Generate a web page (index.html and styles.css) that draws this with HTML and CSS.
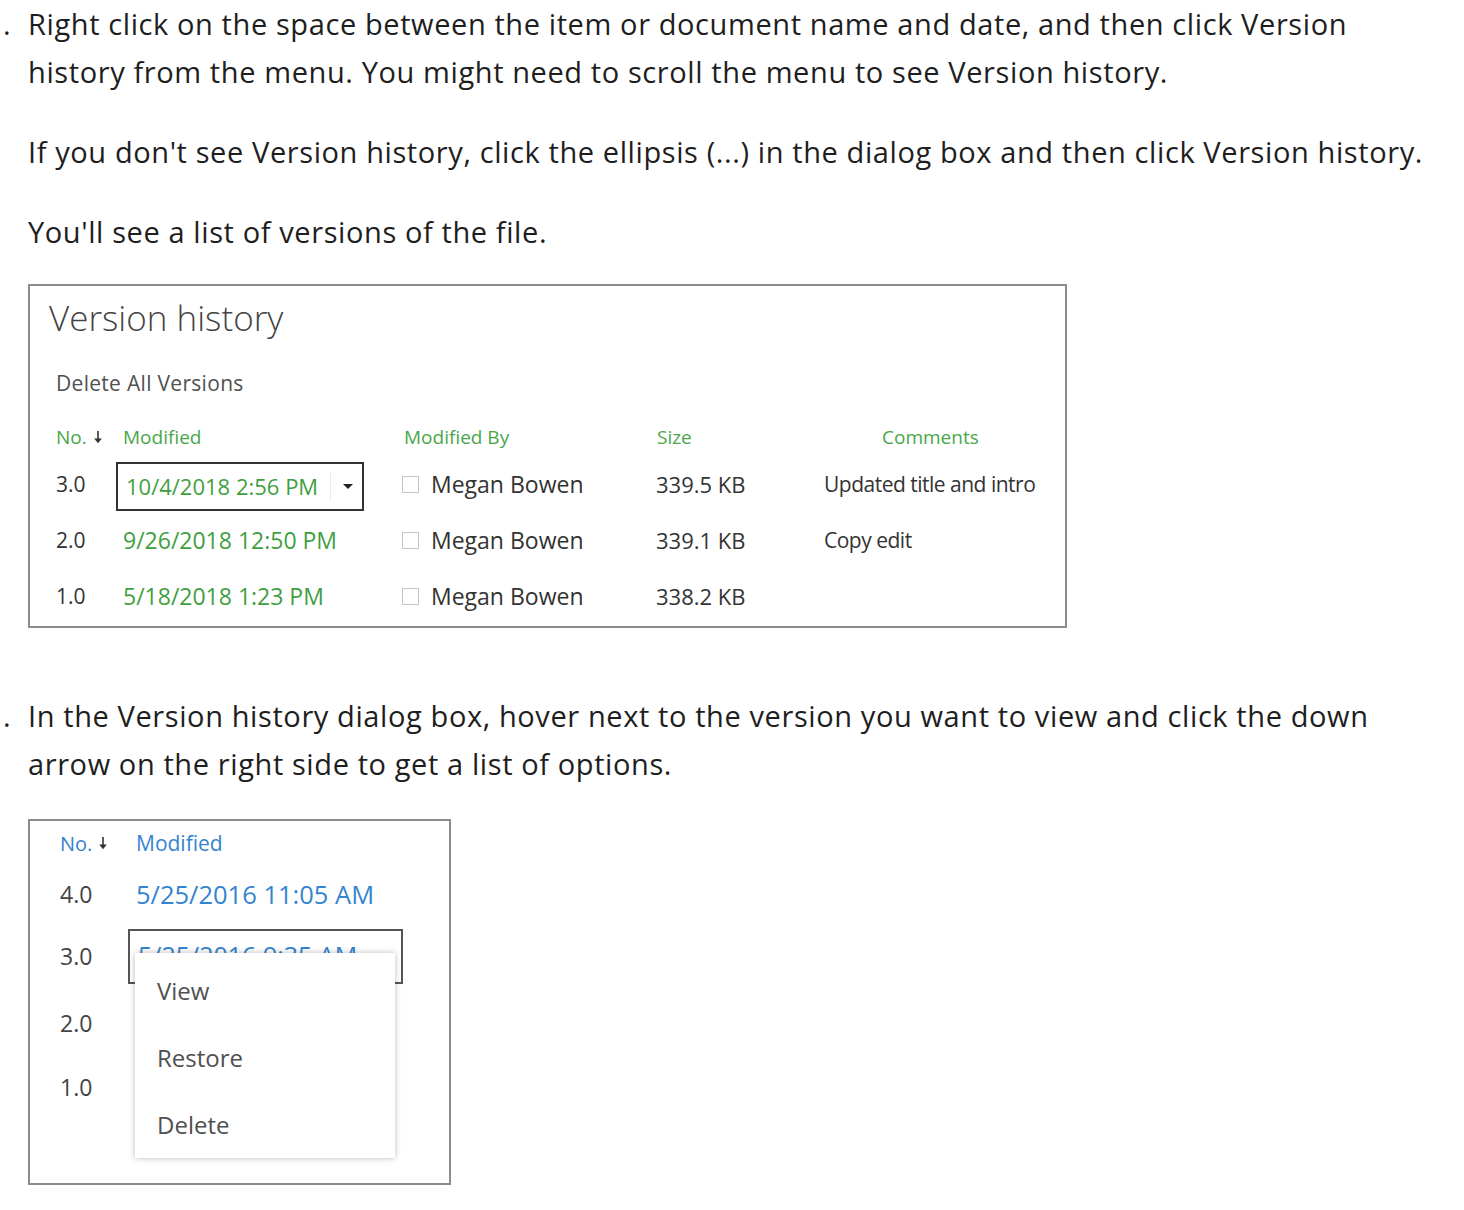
FILE: index.html
```html
<!DOCTYPE html>
<html lang="en">

<head>
    <meta charset="UTF-8">
    <meta name="viewport" content="width=device-width, initial-scale=1.0">
    <title>Version history</title>
    <link rel="stylesheet" href="styles.css">
</head>

<body>
    <div class="step">
        <div class="num">.</div>
        <div class="content">
            <p>Right click on the space between the item or document name and date, and then click Version history from the menu. You might need to scroll the menu to see Version history.</p>
            <p>If you don't see Version history, click the ellipsis (...) in the dialog box and then click Version history.</p>
            <p>You'll see a list of versions of the file.</p>

            <div class="shot shot-green">
                <h2 class="shot-title">Version history</h2>
                <div class="delete-all">Delete All Versions</div>
                <div class="vrow vhead">
                    <div class="c-no">No. <svg class="arrow" width="10" height="13" viewBox="0 0 10 13"><path d="M5 0v10" stroke="#333" stroke-width="1.6"/><path d="M1.2 7.5L5 12.2 8.8 7.5z" fill="#333"/></svg></div>
                    <div class="c-mod">Modified</div>
                    <div class="c-by">Modified By</div>
                    <div class="c-size">Size</div>
                    <div class="c-com center">Comments</div>
                </div>
                <div class="vrow">
                    <div class="c-no">3.0</div>
                    <div class="c-mod">
                        <div class="picker">
                            <span class="date">10/4/2018 2:56 PM</span>
                            <span class="sep"></span>
                            <span class="caret"></span>
                        </div>
                    </div>
                    <div class="c-by"><span class="box"></span>Megan Bowen</div>
                    <div class="c-size">339.5 KB</div>
                    <div class="c-com">Updated title and intro</div>
                </div>
                <div class="vrow">
                    <div class="c-no">2.0</div>
                    <div class="c-mod"><span class="date plain">9/26/2018 12:50 PM</span></div>
                    <div class="c-by"><span class="box"></span>Megan Bowen</div>
                    <div class="c-size">339.1 KB</div>
                    <div class="c-com">Copy edit</div>
                </div>
                <div class="vrow">
                    <div class="c-no">1.0</div>
                    <div class="c-mod"><span class="date plain">5/18/2018 1:23 PM</span></div>
                    <div class="c-by"><span class="box"></span>Megan Bowen</div>
                    <div class="c-size">338.2 KB</div>
                    <div class="c-com"></div>
                </div>
            </div>
        </div>
    </div>

    <div class="step step2">
        <div class="num">.</div>
        <div class="content">
            <p>In the Version history dialog box, hover next to the version you want to view and click the down arrow on the right side to get a list of options.</p>

            <div class="shot shot-blue">
                <div class="brow bhead">
                    <div class="b-no">No. <svg class="arrow" width="10" height="13" viewBox="0 0 10 13"><path d="M5 0v10" stroke="#333" stroke-width="1.6"/><path d="M1.2 7.5L5 12.2 8.8 7.5z" fill="#333"/></svg></div>
                    <div class="b-mod">Modified</div>
                </div>
                <div class="brow r4">
                    <div class="b-no">4.0</div>
                    <div class="b-mod">5/25/2016 11:05 AM</div>
                </div>
                <div class="brow r3">
                    <div class="b-no">3.0</div>
                    <div class="b-mod">
                        <div class="picker2"><span class="hidden-date">5/25/2016 9:35 AM</span></div>
                    </div>
                </div>
                <div class="brow r2">
                    <div class="b-no">2.0</div>
                </div>
                <div class="brow r1">
                    <div class="b-no">1.0</div>
                </div>

                <ul class="menu">
                    <li>View</li>
                    <li>Restore</li>
                    <li>Delete</li>
                </ul>
            </div>
        </div>
    </div>
</body>

</html>
```

FILE: styles.css
```css
* {
    padding: 0;
    margin: 0;
    box-sizing: border-box;
}

body {
    font-family: "Open Sans", "Noto Sans", sans-serif;
    color: #1e1e1e;
    background: #fff;
}

.step {
    display: flex;
}

.num {
    width: 28px;
    padding-left: 3px;
    font-size: 29px;
    line-height: 48px;
}

.content {
    flex: 1;
    max-width: 1410px;
}

.content p {
    font-size: 29px;
    line-height: 48px;
    margin-bottom: 32px;
    letter-spacing: 0.6px;
    margin-top: -2px;
    padding-top: 2px;
}

.step2 {
    margin-top: 64px;
}

.step2 .content p {
    margin-bottom: 31px;
}

.shot {
    position: relative;
    border: 2px solid #8c8c8c;
    background: #fff;
    color: #444;
}

/* first screenshot */

.shot-green {
    width: 1039px;
    height: 344px;
    margin-top: -4px;
    padding-left: 26px;
}

.shot-title {
    font-weight: 300;
    font-size: 35px;
    line-height: 40px;
    padding-top: 12px;
    margin-left: -7px;
    color: #444;
}

.delete-all {
    font-size: 21px;
    line-height: 28px;
    margin-top: 31px;
    color: #505050;
    letter-spacing: 0.3px;
}

.vrow {
    display: flex;
    align-items: center;
    height: 56px;
    font-size: 23px;
    color: #333;
}

.vhead {
    height: 38px;
    margin-top: 21px;
    font-size: 19px;
    color: #4aa64a;
}

.c-no {
    width: 60px;
    display: flex;
    align-items: center;
    gap: 6px;
    font-size: 21px;
}

.vhead .c-no {
    font-size: 19px;
}

.c-mod {
    width: 286px;
    padding-left: 7px;
}

.c-by {
    width: 254px;
    display: flex;
    align-items: center;
}

.vhead .c-by {
    padding-left: 2px;
}

.c-size {
    width: 168px;
    font-size: 22px;
}

.vhead .c-size {
    padding-left: 1px;
    font-size: 19px;
}

.c-com {
    width: 222px;
    font-size: 21px;
    letter-spacing: -0.5px;
    white-space: nowrap;
}

.vhead .c-com {
    font-size: 19px;
    letter-spacing: 0;
}

.center {
    padding-left: 58px;
}

.date {
    color: #3f9f3f;
}

.picker {
    display: flex;
    align-items: center;
    width: 248px;
    height: 49px;
    margin-left: -7px;
    padding-left: 8px;
    border: 2px solid #333;
    margin-top: 4px;
}

.picker .date {
    flex: 1;
    font-size: 22px;
}

.sep {
    width: 1px;
    height: 30px;
    background: #ececec;
    margin-right: 12px;
}

.caret {
    width: 0;
    height: 0;
    border-left: 5px solid transparent;
    border-right: 5px solid transparent;
    border-top: 5px solid #222;
    margin-right: 9px;
}

.box {
    width: 17px;
    height: 17px;
    border: 1px solid #c4c4c4;
    margin-right: 12px;
}

/* second screenshot */

.shot-blue {
    width: 423px;
    height: 366px;
    padding-left: 30px;
}

.brow {
    display: flex;
    align-items: center;
    font-size: 23px;
    color: #444;
}

.bhead {
    height: 44px;
    font-size: 21px;
    color: #3584cf;
}

.r4 {
    height: 58px;
}

.r3 {
    height: 66px;
}

.r2 {
    height: 68px;
}

.r1 {
    height: 60px;
}

.b-no {
    width: 76px;
    display: flex;
    align-items: center;
    gap: 6px;
}

.bhead .b-no {
    font-size: 20px;
}

.r4 .b-mod {
    font-size: 25.5px;
    color: #3584cf;
}

.picker2 {
    width: 275px;
    height: 55px;
    margin-left: -8px;
    border: 2px solid #555;
    padding-left: 8px;
    overflow: hidden;
}

.hidden-date {
    display: block;
    font-size: 25px;
    color: #3584cf;
    line-height: 30px;
    padding-top: 9px;
}

.menu {
    position: absolute;
    left: 105px;
    top: 132px;
    width: 260px;
    height: 205px;
    list-style-type: none;
    background: #fff;
    box-shadow: 0 0 6px rgba(0, 0, 0, 0.28);
    padding-top: 20px;
}

.menu li {
    font-size: 24px;
    line-height: 36px;
    height: 67px;
    padding-left: 22px;
    color: #505050;
}
```
